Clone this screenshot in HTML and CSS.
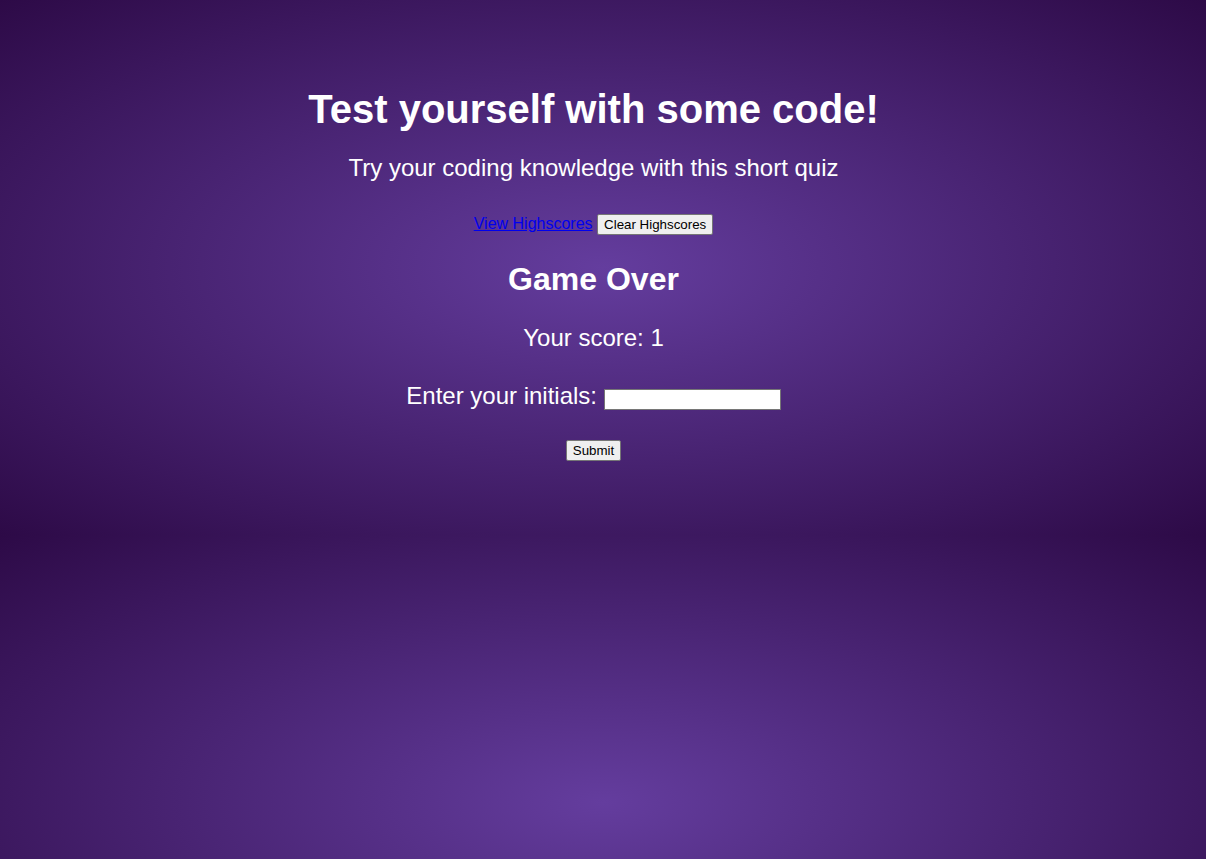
FILE: index.html
```html
<!DOCTYPE html>
<html>
<head>
<meta charset="utf-8">
<title>Code Quiz</title>
<link rel="stylesheet" href="styles.css">
</head>
<body>
<header class="intro">
  <h1 class="title">Test yourself with some code!</h1>
  <p class="subtitle">Try your coding knowledge with this short quiz</p>
  <div class="scores">
    <a href="#" class="view-link">View Highscores</a>
    <button class="btn">Clear Highscores</button>
  </div>
</header>
<section class="game-over">
  <h2 class="go-title">Game Over</h2>
  <p class="score">Your score: 1</p>
  <form class="initials-form">
    <label class="initials-label">Enter your initials: <input type="text" class="initials-input"></label>
    <div class="submit-row"><button type="button" class="btn">Submit</button></div>
  </form>
</section>
</body>
</html>
```

FILE: styles.css
```css
html {
  min-height: 535px;
  background: radial-gradient(#643d9e, #2d0a47);
}
body {
  margin: 8px;
  padding: 79px 19px 0 0;
  font-family: "Liberation Sans", Arial, sans-serif;
  color: #fff;
  text-align: center;
}
.title {
  font-size: 40px;
  margin: 0 0 22px;
}
.subtitle {
  font-size: 24px;
  margin: 0 0 32px;
}
.scores {
  font-size: 16px;
}
.view-link {
  color: #0000ee;
}
.btn {
  font-family: "Liberation Sans", Arial, sans-serif;
  font-size: 13.33px;
  color: #000;
  background: #efefef;
  border: 1px solid #767676;
  border-radius: 2px;
  padding: 2px 6px;
}
.go-title {
  font-size: 32px;
  margin: 26px 0 26px;
}
.score {
  font-size: 24px;
  margin: 0 0 30px;
}
.initials-label {
  font-size: 24px;
}
.initials-input {
  width: 171px;
  height: 17px;
  border: 1px solid #767676;
  padding: 1px 2px;
}
.submit-row {
  margin-top: 30px;
}
```
